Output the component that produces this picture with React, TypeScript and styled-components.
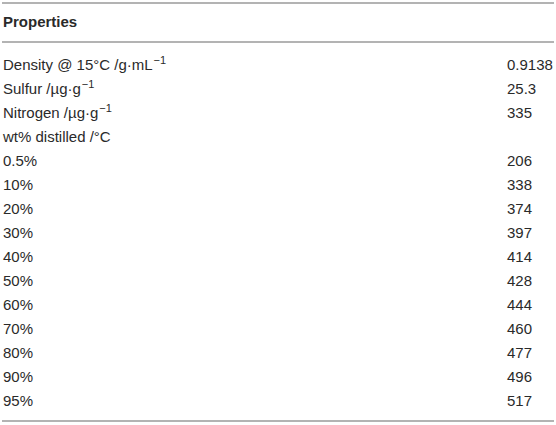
import React from "react";
import styled, { createGlobalStyle } from "styled-components";

const Global = createGlobalStyle`
  html, body { margin: 0; padding: 0; background: #ffffff; }
  body { font-family: "Liberation Sans", Arial, sans-serif; color: #2a2a2a; }
`;

const Page = styled.div`
  padding: 2px 2px 0 2px;
  width: 552px;
`;

const Table = styled.table`
  width: 100%;
  border-collapse: collapse;
  font-size: 15px;
  line-height: 24px;
  border-top: 2px solid #b3b3b3;
  border-bottom: 2px solid #b3b3b3;
`;

const HeadCell = styled.th`
  text-align: left;
  font-weight: bold;
  padding: 6px 1px 7px 1px;
  border-bottom: 2px solid #b3b3b3;
`;

const Cell = styled.td<{ $value?: boolean }>`
  padding: 0 1px;
  text-align: left;
  width: ${(p) => (p.$value ? "46px" : "auto")};
  white-space: nowrap;
`;

const SpacerRow = styled.tr<{ $h: number }>`
  height: ${(p) => p.$h}px;
`;

const Sup = styled.sup`
  font-size: 11px;
  line-height: 0;
  vertical-align: 6px;
  margin-left: 1px;
`;

const rows: [React.ReactNode, string][] = [
  [<>Density @ 15°C /g·mL<Sup>−1</Sup></>, "0.9138"],
  [<>Sulfur /µg·g<Sup>−1</Sup></>, "25.3"],
  [<>Nitrogen /µg·g<Sup>−1</Sup></>, "335"],
  [<>wt% distilled /°C</>, ""],
  ["0.5%", "206"],
  ["10%", "338"],
  ["20%", "374"],
  ["30%", "397"],
  ["40%", "414"],
  ["50%", "428"],
  ["60%", "444"],
  ["70%", "460"],
  ["80%", "477"],
  ["90%", "496"],
  ["95%", "517"],
];

export default function App() {
  return (
    <Page>
      <Global />
      <Table>
        <thead>
          <tr>
            <HeadCell colSpan={2}>Properties</HeadCell>
          </tr>
        </thead>
        <tbody>
          <SpacerRow $h={11}><td colSpan={2} /></SpacerRow>
          {rows.map(([label, value], i) => (
            <tr key={i}>
              <Cell>{label}</Cell>
              <Cell $value>{value}</Cell>
            </tr>
          ))}
          <SpacerRow $h={8}><td colSpan={2} /></SpacerRow>
        </tbody>
      </Table>
    </Page>
  );
}
